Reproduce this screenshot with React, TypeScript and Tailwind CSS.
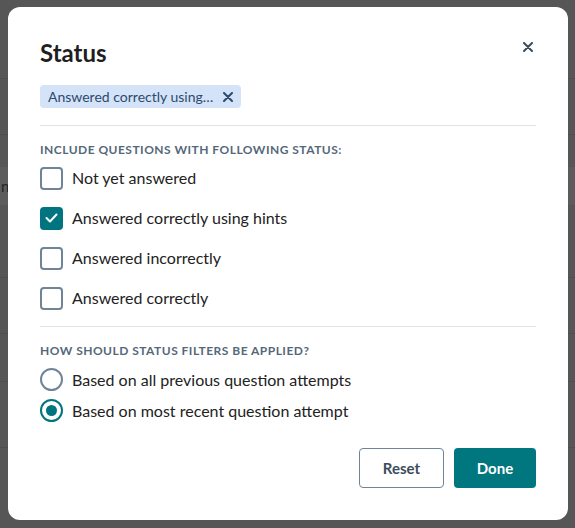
import { useState } from "react";

const statusOptions = [
  "Not yet answered",
  "Answered correctly using hints",
  "Answered incorrectly",
  "Answered correctly",
];

const applyOptions = [
  "Based on all previous question attempts",
  "Based on most recent question attempt",
];

const CloseIcon = ({ size = 10 }: { size?: number }) => (
  <svg width={size} height={size} viewBox="0 0 10 10" fill="none">
    <path d="M1 1L9 9M9 1L1 9" stroke="currentColor" strokeWidth="2" strokeLinecap="round" />
  </svg>
);

const Checkbox = ({ checked, onClick }: { checked: boolean; onClick: () => void }) => (
  <button
    type="button"
    onClick={onClick}
    className={`flex h-[23px] w-[23px] shrink-0 items-center justify-center rounded-[4px] border-2 ${
      checked ? "border-[#00747f] bg-[#00747f]" : "border-[#6f8496] bg-white"
    }`}
  >
    {checked && (
      <svg width="13" height="10" viewBox="0 0 13 10" fill="none">
        <path d="M1.5 5L5 8.5L11.5 1.5" stroke="white" strokeWidth="2" strokeLinecap="round" strokeLinejoin="round" />
      </svg>
    )}
  </button>
);

const Radio = ({ checked, onClick }: { checked: boolean; onClick: () => void }) => (
  <button
    type="button"
    onClick={onClick}
    className={`flex h-[23px] w-[23px] shrink-0 items-center justify-center rounded-full border-2 ${
      checked ? "border-[#00747f]" : "border-[#6f8496]"
    }`}
  >
    {checked && <span className="h-[11px] w-[11px] rounded-full bg-[#00747f]" />}
  </button>
);

export default function App() {
  const [selected, setSelected] = useState<number[]>([1]);
  const [mode, setMode] = useState(1);

  const toggle = (i: number) =>
    setSelected((prev) => (prev.includes(i) ? prev.filter((x) => x !== i) : [...prev, i]));

  return (
    <div className="relative h-[528px] w-[575px] overflow-hidden bg-[#565656] font-['Lato',sans-serif]">
      {/* dimmed page behind the dialog */}
      <div className="flex h-full flex-col">
        <div className="h-[79px] shrink-0 border-b border-[#4e4e4e]" />
        <div className="h-[56px] shrink-0 border-b border-[#4e4e4e]" />
        <div className="h-[32px] shrink-0" />
        <div className="flex h-[38px] shrink-0 items-center bg-[#5c5c5c] text-[15px] text-[#222]">
          <span className="pl-[1px]">ne</span>
        </div>
        <div className="h-[73px] shrink-0 border-b border-[#4e4e4e]" />
        <div className="h-[56px] shrink-0 border-b border-[#4e4e4e]" />
        <div className="h-[48px] shrink-0 border-b border-[#4e4e4e]" />
        <div className="h-[66px] shrink-0 border-b border-[#4e4e4e]" />
      </div>

      <div className="absolute left-[8px] top-[7px] flex h-[513px] w-[560px] flex-col rounded-[12px] bg-white px-8 pt-[30px] text-[#222]">
        <div className="flex items-start justify-between">
          <h2 className="text-[24px] font-bold leading-[32px] text-[#1f1f1f]">Status</h2>
          <button type="button" className="mr-[3px] mt-[5px] text-[#3b4c5c]">
            <CloseIcon />
          </button>
        </div>

        <div className="mt-[16px] flex">
          <span className="flex h-[23px] items-center gap-[10px] rounded-[4px] bg-[#d4e3f7] pl-[8px] pr-[8px] text-[14px] text-[#2b4a6f]">
            Answered correctly using…
            <CloseIcon size={10} />
          </span>
        </div>

        <div className="mt-[17px] border-t border-[#e3e3e3]" />

        <p className="mt-[16px] text-[12px] font-bold uppercase leading-[16px] tracking-[0.04em] text-[#55687a]">
          Include questions with following status:
        </p>

        <div className="flex flex-col">
          {statusOptions.map((label, i) => (
            <label key={label} className="flex h-[40px] cursor-pointer items-center gap-[9px]">
              <Checkbox checked={selected.includes(i)} onClick={() => toggle(i)} />
              <span className="text-[16px]">{label}</span>
            </label>
          ))}
        </div>

        <div className="mt-[8px] border-t border-[#e3e3e3]" />

        <p className="mt-[16px] text-[12px] font-bold uppercase leading-[16px] tracking-[0.04em] text-[#55687a]">
          How should status filters be applied?
        </p>

        <div className="mt-[5px] flex flex-col">
          {applyOptions.map((label, i) => (
            <label key={label} className="flex h-[31px] cursor-pointer items-center gap-[9px]">
              <Radio checked={mode === i} onClick={() => setMode(i)} />
              <span className="text-[16px]">{label}</span>
            </label>
          ))}
        </div>

        <div className="mt-[22px] flex justify-end gap-[10px]">
          <button
            type="button"
            className="h-[40px] w-[85px] rounded-[4px] border border-[#6f8496] text-[15px] font-bold text-[#3b4c5c]"
          >
            Reset
          </button>
          <button
            type="button"
            className="h-[40px] w-[82px] rounded-[4px] bg-[#00767f] text-[15px] font-bold text-white"
          >
            Done
          </button>
        </div>
      </div>
    </div>
  );
}
